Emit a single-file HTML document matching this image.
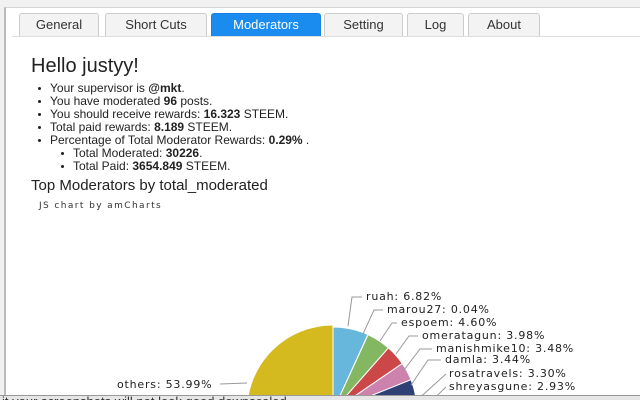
<!DOCTYPE html>
<html><head><style>
body{margin:0;width:640px;height:400px;overflow:hidden;background:#f1f1f1;font-family:"Liberation Sans",Arial,sans-serif;position:relative}
.pop{position:absolute;left:4px;top:7px;width:636px;height:388px;background:#fff;border-left:2px solid #bbb;border-top:1px solid #d5d5d5;overflow:hidden}
.tab{position:absolute;top:5px;height:22px;border:1px solid #ccc;border-bottom:none;background:#f3f3f3;border-radius:3px 3px 0 0;font-size:13px;color:#333;text-align:center;line-height:22px}
.tabline{position:absolute;left:6px;right:0;top:28px;border-top:1px solid #ddd}
h1{position:absolute;left:25px;top:47px;margin:0;font-weight:normal;font-size:20px;color:#222}
ul{position:absolute;margin:0;padding:0;list-style:none;font-size:12px;color:#222}
li{height:13px;line-height:13px;position:relative;white-space:nowrap}
li:before{content:"";position:absolute;left:-12px;top:5px;width:3px;height:3px;background:#222;border-radius:50%}
b{font-weight:bold}
.h2{position:absolute;left:25px;top:169px;font-size:15px;color:#222}
.js{position:absolute;left:33px;top:193px;font-family:"DejaVu Sans",sans-serif;font-size:9px;letter-spacing:1.4px;color:#333}
.bot{position:absolute;left:0;top:395px;width:640px;height:4px;background:#e6e6e6;border-top:1px solid #999;overflow:hidden}
</style></head><body>
<div class="pop">
<div class="tab" style="left:13px;width:78px">General</div>
<div class="tab" style="left:99px;width:100px">Short Cuts</div>
<div class="tab" style="left:205px;width:108px;background:#1a8cf0;border-color:#1a7fe0;color:#fff">Moderators</div>
<div class="tab" style="left:318px;width:77px">Setting</div>
<div class="tab" style="left:401px;width:55px">Log</div>
<div class="tab" style="left:462px;width:70px">About</div>
<div class="tabline"></div>
<h1>Hello justyy!</h1>
<ul style="left:44px;top:74px">
<li>Your supervisor is <b>@mkt</b>.</li>
<li>You have moderated <b>96</b> posts.</li>
<li>You should receive rewards: <b>16.323</b> STEEM.</li>
<li>Total paid rewards: <b>8.189</b> STEEM.</li>
<li>Percentage of Total Moderator Rewards: <b>0.29%</b> .</li>
</ul>
<ul style="left:67px;top:139px">
<li>Total Moderated: <b>30226</b>.</li>
<li>Total Paid: <b>3654.849</b> STEEM.</li>
</ul>
<div class="h2">Top Moderators by total_moderated</div>
<div class="js">JS chart by amCharts</div>
</div>
<svg style="position:absolute;left:0;top:0" width="640" height="395">
<g stroke="#fff" stroke-width="1">
<path d="M333,411L333,327A84,84 0 0 1 367.9,334.6Z" fill="#67b7dc"/>
<path d="M333,411L368.1,334.7A84,84 0 0 1 388.4,347.9Z" fill="#84b761"/>
<path d="M333,411L388.4,347.9A84,84 0 0 1 402.3,363.5Z" fill="#cc4748"/>
<path d="M333,411L402.3,363.5A84,84 0 0 1 411,379.7Z" fill="#cd82ad"/>
<path d="M333,411L411,379.7A84,84 0 0 1 415.8,397.1Z" fill="#2f4074"/>
<path d="M333,411L415.8,397.1A84,84 0 0 1 416.9,414.5Z" fill="#448e4d"/>
<path d="M333,411L416.9,414.5A84,84 0 0 1 414.9,429.8Z" fill="#b7b83f"/>
<path d="M333,411L414.9,429.8A84,84 0 0 1 411.5,440.8Z" fill="#b9783f"/>
<path d="M333,411L411.5,440.8A84,84 0 0 1 406.7,451.2Z" fill="#b93e3d"/>
<path d="M333,411L406.7,451.2A84,84 0 0 1 400.6,460.9Z" fill="#913167"/>
<path d="M333,411L400.6,460.9A84,84 0 0 1 393.2,469.6Z" fill="#67b7dc"/>
<path d="M333,411L393.2,469.6A84,84 0 0 1 375,483.7Z" fill="#6ec1a5"/>
<path d="M333,411L375,483.7A84,84 0 0 1 353.8,492.4Z" fill="#3b3ba0"/>
<path d="M333,411L354.2,494.3A86,86 0 1 1 333,325Z" fill="#d4ba1f"/>
</g>
<g stroke="#999" fill="none" stroke-width="1">
<path d="M348,326L352,297L362,297"/>
<path d="M363,334L374,310L383,310"/>
<path d="M380,341L392,323L397,323"/>
<path d="M396,354L409,336L418,336"/>
<path d="M404,370L420,349L432,349"/>
<path d="M411,385L428,360L441,360"/>
<path d="M416,401L446,374"/>
<path d="M416,416L446,387"/>
<path d="M220,384L247,383"/>
</g>
<g font-family="DejaVu Sans,Verdana,sans-serif" font-size="11" letter-spacing="0.8" fill="#222">
<text x="366" y="300">ruah: 6.82%</text>
<text x="387" y="313">marou27: 0.04%</text>
<text x="401" y="326">espoem: 4.60%</text>
<text x="422" y="339">omeratagun: 3.98%</text>
<text x="436" y="352">manishmike10: 3.48%</text>
<text x="445" y="363">damla: 3.44%</text>
<text x="449" y="377">rosatravels: 3.30%</text>
<text x="449" y="390">shreyasgune: 2.93%</text>
<text x="117" y="388">others: 53.99%</text>
</g>
</svg>
<div class="bot"><div style="position:absolute;left:2px;top:-1px;font-size:13px;line-height:13px;color:#333;white-space:nowrap">it your screenshots will not look good downscaled</div></div>
</body></html>
